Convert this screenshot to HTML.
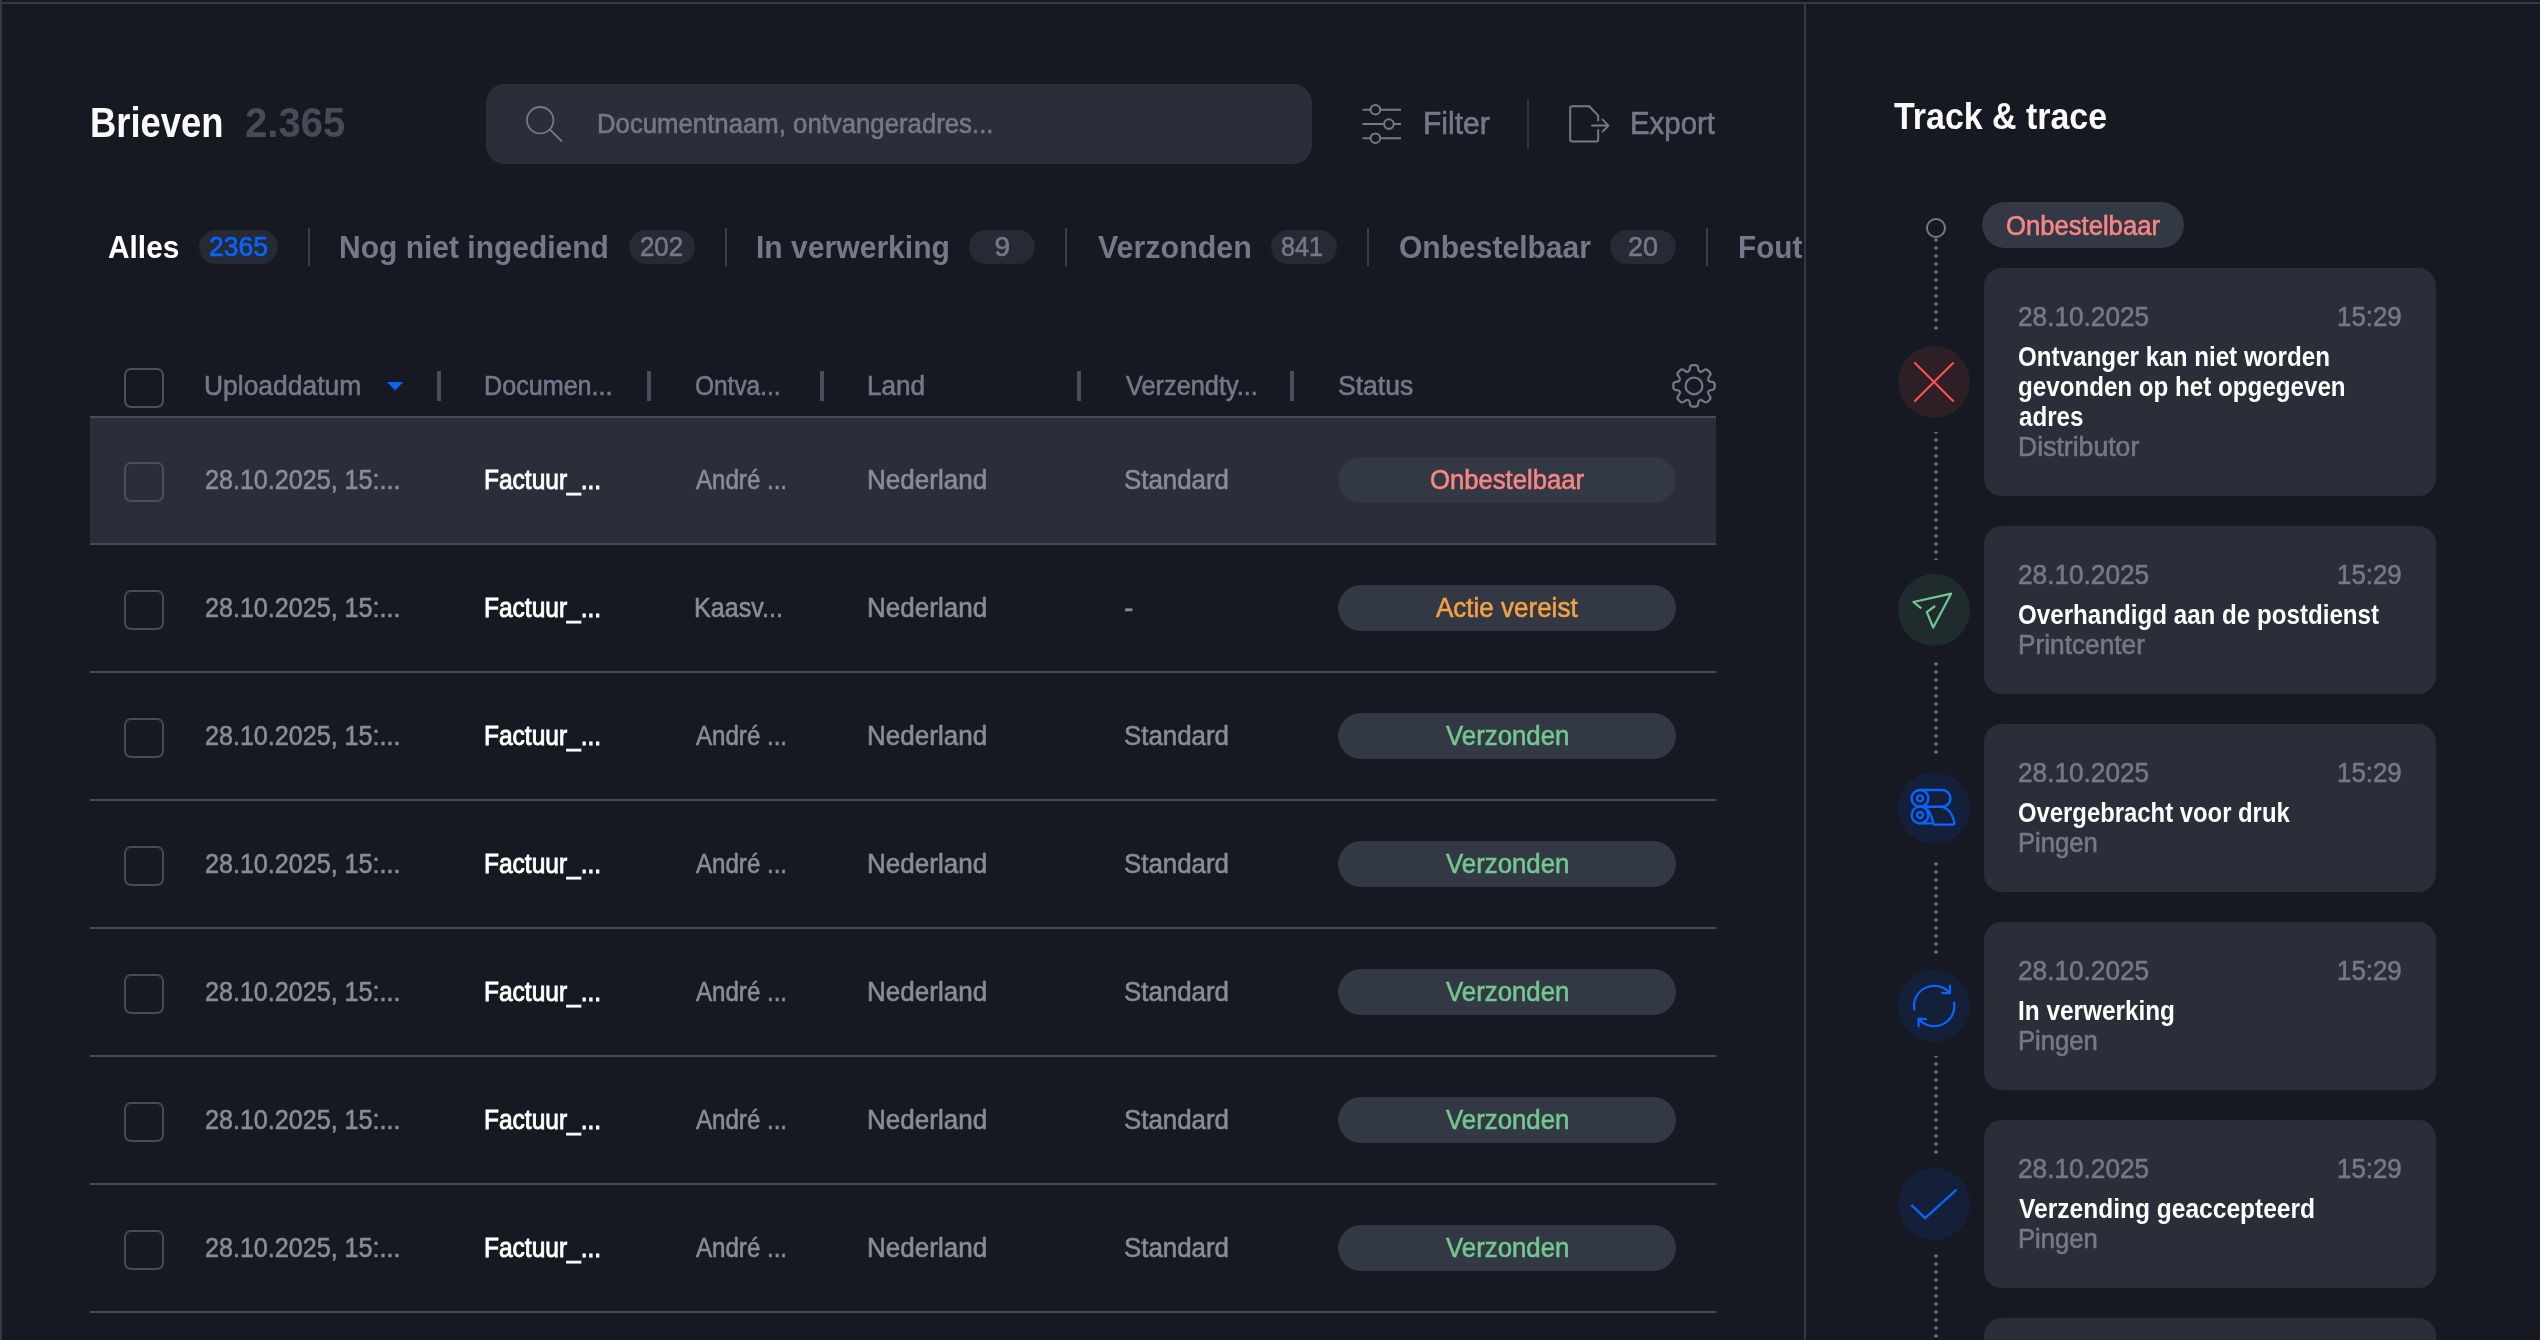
<!DOCTYPE html>
<html lang="nl"><head><meta charset="utf-8"><title>Brieven</title>
<style>
*{margin:0;padding:0}html,body{width:2540px;height:1340px;overflow:hidden;background:#161922}
body{position:relative;font-family:"Liberation Sans",sans-serif;}
body div,body svg,.t{position:absolute}
#app{left:0;top:0;width:2540px;height:1340px;will-change:transform}
.t{white-space:pre;line-height:1;transform-origin:0 0;-webkit-text-stroke:0.6px currentColor}
.b{-webkit-text-stroke:0}
</style></head>
<body>
<div id="app">
<div style="left:0px;top:0px;width:2px;height:1340px;background:#323844;"></div>
<div style="left:0px;top:2px;width:2540px;height:2px;background:#323844;"></div>
<div style="left:1804px;top:4px;width:2px;height:1336px;background:#323844;"></div>
<div style="left:486px;top:84px;width:826px;height:80px;background:#2a2e38;border-radius:19px;"></div>
<svg style="left:520px;top:100px" width="50" height="50" viewBox="520 100 50 50" fill="none" stroke="#757889" stroke-width="1.8" stroke-linecap="round"><circle cx="540.2" cy="120.2" r="13.2"/><path d="M550.2 129.8 L561.6 141"/></svg>
<svg style="left:1356px;top:98px" width="52" height="52" viewBox="1356 98 52 52" fill="none" stroke="#757889" stroke-width="2" stroke-linecap="butt"><path d="M1362.5 109.7H1370.2M1380.6 109.7H1401M1362.5 124.1H1383.7M1394.1 124.1H1401M1362.5 138.2H1370.2M1380.6 138.2H1401"/><circle cx="1375.4" cy="109.7" r="4.8"/><circle cx="1388.9" cy="124.1" r="4.8"/><circle cx="1375.4" cy="138.2" r="4.8"/></svg>
<div style="left:1527px;top:99px;width:2px;height:50px;background:#2e323e;"></div>
<svg style="left:1562px;top:98px" width="54" height="52" viewBox="1562 98 54 52" fill="none" stroke="#757889" stroke-width="2" stroke-linecap="round" stroke-linejoin="round"><path d="M1598.2 120.5V115.6L1589.2 106.3H1572.2a2 2 0 0 0 -2 2V139.5a2 2 0 0 0 2 2H1596.2a2 2 0 0 0 2 -2V130"/><path d="M1592 125.6H1608M1602.6 119.6L1608.4 125.6L1602.6 131.6"/></svg>
<div style="left:199px;top:230px;width:79px;height:34px;background:#262a35;border-radius:17px;"></div>
<div style="left:308px;top:228px;width:2px;height:38px;background:#3b3f4c;"></div>
<div style="left:629px;top:230px;width:66px;height:34px;background:#262a35;border-radius:17px;"></div>
<div style="left:725px;top:228px;width:2px;height:38px;background:#3b3f4c;"></div>
<div style="left:969px;top:230px;width:66px;height:34px;background:#262a35;border-radius:17px;"></div>
<div style="left:1065px;top:228px;width:2px;height:38px;background:#3b3f4c;"></div>
<div style="left:1271px;top:230px;width:66px;height:34px;background:#262a35;border-radius:17px;"></div>
<div style="left:1367px;top:228px;width:2px;height:38px;background:#3b3f4c;"></div>
<div style="left:1610px;top:230px;width:66px;height:34px;background:#262a35;border-radius:17px;"></div>
<div style="left:1706px;top:228px;width:2px;height:38px;background:#3b3f4c;"></div>
<div style="left:1730px;top:220px;width:72px;height:60px;overflow:hidden"><span id="fout" class="t b" style="left:8px;top:11px;font-size:32px;transform:scaleX(0.93);font-weight:700;color:#757889">Fout</span></div>
<div style="left:124px;top:368px;width:40px;height:40px;box-sizing:border-box;border:2px solid #4a4f5c;border-radius:7px"></div>
<svg style="left:386px;top:380px" width="18" height="12" viewBox="386 380 18 12"><path d="M387 382H403.2L395.1 390.4Z" fill="#0864ff"/></svg>
<div style="left:437px;top:371px;width:4px;height:30px;background:#4a4e5c;"></div>
<div style="left:647px;top:371px;width:4px;height:30px;background:#4a4e5c;"></div>
<div style="left:820px;top:371px;width:4px;height:30px;background:#4a4e5c;"></div>
<div style="left:1077px;top:371px;width:4px;height:30px;background:#4a4e5c;"></div>
<div style="left:1290px;top:371px;width:4px;height:30px;background:#4a4e5c;"></div>
<svg style="left:1668px;top:360px" width="52" height="52" viewBox="1668 360 52 52" fill="none" stroke="#757889" stroke-width="2.2" stroke-linejoin="round"><path d="M1688.1 371.8Q1689.6 371.1 1689.9 368.5L1689.9 367.7Q1690.2 365.2 1692.8 365.2L1695.2 365.2Q1697.8 365.2 1698.1 367.7L1698.1 368.5Q1698.4 371.1 1699.9 371.8L1699.9 371.8Q1701.3 372.4 1703.3 370.7L1704.0 370.2Q1706.0 368.5 1707.8 370.3L1709.6 372.1Q1711.4 373.9 1709.7 375.9L1709.2 376.6Q1707.5 378.6 1708.1 380.0L1708.1 380.0Q1708.8 381.5 1711.4 381.8L1712.2 381.8Q1714.7 382.1 1714.7 384.7L1714.7 387.1Q1714.7 389.7 1712.2 390.0L1711.4 390.0Q1708.8 390.3 1708.1 391.8L1708.1 391.8Q1707.5 393.2 1709.2 395.2L1709.7 395.9Q1711.4 397.9 1709.6 399.7L1707.8 401.5Q1706.0 403.3 1704.0 401.6L1703.3 401.1Q1701.3 399.4 1699.9 400.0L1699.9 400.0Q1698.4 400.7 1698.1 403.3L1698.1 404.1Q1697.8 406.6 1695.2 406.6L1692.8 406.6Q1690.2 406.6 1689.9 404.1L1689.9 403.3Q1689.6 400.7 1688.1 400.0L1688.1 400.0Q1686.7 399.4 1684.7 401.1L1684.0 401.6Q1682.0 403.3 1680.2 401.5L1678.4 399.7Q1676.6 397.9 1678.3 395.9L1678.8 395.2Q1680.5 393.2 1679.9 391.8L1679.9 391.8Q1679.2 390.3 1676.6 390.0L1675.8 390.0Q1673.3 389.7 1673.3 387.1L1673.3 384.7Q1673.3 382.1 1675.8 381.8L1676.6 381.8Q1679.2 381.5 1679.9 380.0L1679.9 380.0Q1680.5 378.6 1678.8 376.6L1678.3 375.9Q1676.6 373.9 1678.4 372.1L1680.2 370.3Q1682.0 368.5 1684.0 370.2L1684.7 370.7Q1686.7 372.4 1688.1 371.8Z"/><circle cx="1694.0" cy="385.9" r="8.4"/></svg>
<div style="left:90px;top:416px;width:1626px;height:2px;background:#464b58;"></div>
<div style="left:90px;top:418px;width:1626px;height:125px;background:#2a2e38;"></div>
<div style="left:90px;top:543px;width:1626px;height:2px;background:#464b58;"></div>
<div style="left:124px;top:462px;width:40px;height:40px;box-sizing:border-box;border:2px solid #4a4f5c;border-radius:7px"></div>
<div style="left:1338px;top:457px;width:338px;height:46px;background:#323844;border-radius:23px;"></div>
<div style="left:90px;top:671px;width:1626px;height:2px;background:#464b58;"></div>
<div style="left:124px;top:590px;width:40px;height:40px;box-sizing:border-box;border:2px solid #454a57;border-radius:7px"></div>
<div style="left:1338px;top:585px;width:338px;height:46px;background:#323844;border-radius:23px;"></div>
<div style="left:90px;top:799px;width:1626px;height:2px;background:#464b58;"></div>
<div style="left:124px;top:718px;width:40px;height:40px;box-sizing:border-box;border:2px solid #454a57;border-radius:7px"></div>
<div style="left:1338px;top:713px;width:338px;height:46px;background:#323844;border-radius:23px;"></div>
<div style="left:90px;top:927px;width:1626px;height:2px;background:#464b58;"></div>
<div style="left:124px;top:846px;width:40px;height:40px;box-sizing:border-box;border:2px solid #454a57;border-radius:7px"></div>
<div style="left:1338px;top:841px;width:338px;height:46px;background:#323844;border-radius:23px;"></div>
<div style="left:90px;top:1055px;width:1626px;height:2px;background:#464b58;"></div>
<div style="left:124px;top:974px;width:40px;height:40px;box-sizing:border-box;border:2px solid #454a57;border-radius:7px"></div>
<div style="left:1338px;top:969px;width:338px;height:46px;background:#323844;border-radius:23px;"></div>
<div style="left:90px;top:1183px;width:1626px;height:2px;background:#464b58;"></div>
<div style="left:124px;top:1102px;width:40px;height:40px;box-sizing:border-box;border:2px solid #454a57;border-radius:7px"></div>
<div style="left:1338px;top:1097px;width:338px;height:46px;background:#323844;border-radius:23px;"></div>
<div style="left:90px;top:1311px;width:1626px;height:2px;background:#464b58;"></div>
<div style="left:124px;top:1230px;width:40px;height:40px;box-sizing:border-box;border:2px solid #454a57;border-radius:7px"></div>
<div style="left:1338px;top:1225px;width:338px;height:46px;background:#323844;border-radius:23px;"></div>
<div style="left:1926px;top:218px;width:20px;height:20px;box-sizing:border-box;border:2px solid #757889;border-radius:50%"></div>
<div style="left:1982px;top:202px;width:202px;height:46px;background:#323844;border-radius:23px;"></div>
<svg style="left:1934px;top:238px" width="4" height="94" viewBox="0 0 4 94" fill="#757889"><circle cx="2" cy="-6" r="1.75"/><circle cx="2" cy="2" r="1.75"/><circle cx="2" cy="10" r="1.75"/><circle cx="2" cy="18" r="1.75"/><circle cx="2" cy="26" r="1.75"/><circle cx="2" cy="34" r="1.75"/><circle cx="2" cy="42" r="1.75"/><circle cx="2" cy="50" r="1.75"/><circle cx="2" cy="58" r="1.75"/><circle cx="2" cy="66" r="1.75"/><circle cx="2" cy="74" r="1.75"/><circle cx="2" cy="82" r="1.75"/><circle cx="2" cy="90" r="1.75"/><circle cx="2" cy="98" r="1.75"/></svg>
<svg style="left:1934px;top:432px" width="4" height="128" viewBox="0 0 4 128" fill="#757889"><circle cx="2" cy="0" r="1.75"/><circle cx="2" cy="8" r="1.75"/><circle cx="2" cy="16" r="1.75"/><circle cx="2" cy="24" r="1.75"/><circle cx="2" cy="32" r="1.75"/><circle cx="2" cy="40" r="1.75"/><circle cx="2" cy="48" r="1.75"/><circle cx="2" cy="56" r="1.75"/><circle cx="2" cy="64" r="1.75"/><circle cx="2" cy="72" r="1.75"/><circle cx="2" cy="80" r="1.75"/><circle cx="2" cy="88" r="1.75"/><circle cx="2" cy="96" r="1.75"/><circle cx="2" cy="104" r="1.75"/><circle cx="2" cy="112" r="1.75"/><circle cx="2" cy="120" r="1.75"/><circle cx="2" cy="128" r="1.75"/></svg>
<svg style="left:1934px;top:660px" width="4" height="98" viewBox="0 0 4 98" fill="#757889"><circle cx="2" cy="-4" r="1.75"/><circle cx="2" cy="4" r="1.75"/><circle cx="2" cy="12" r="1.75"/><circle cx="2" cy="20" r="1.75"/><circle cx="2" cy="28" r="1.75"/><circle cx="2" cy="36" r="1.75"/><circle cx="2" cy="44" r="1.75"/><circle cx="2" cy="52" r="1.75"/><circle cx="2" cy="60" r="1.75"/><circle cx="2" cy="68" r="1.75"/><circle cx="2" cy="76" r="1.75"/><circle cx="2" cy="84" r="1.75"/><circle cx="2" cy="92" r="1.75"/><circle cx="2" cy="100" r="1.75"/></svg>
<svg style="left:1934px;top:858px" width="4" height="98" viewBox="0 0 4 98" fill="#757889"><circle cx="2" cy="-2" r="1.75"/><circle cx="2" cy="6" r="1.75"/><circle cx="2" cy="14" r="1.75"/><circle cx="2" cy="22" r="1.75"/><circle cx="2" cy="30" r="1.75"/><circle cx="2" cy="38" r="1.75"/><circle cx="2" cy="46" r="1.75"/><circle cx="2" cy="54" r="1.75"/><circle cx="2" cy="62" r="1.75"/><circle cx="2" cy="70" r="1.75"/><circle cx="2" cy="78" r="1.75"/><circle cx="2" cy="86" r="1.75"/><circle cx="2" cy="94" r="1.75"/><circle cx="2" cy="102" r="1.75"/></svg>
<svg style="left:1934px;top:1056px" width="4" height="98" viewBox="0 0 4 98" fill="#757889"><circle cx="2" cy="0" r="1.75"/><circle cx="2" cy="8" r="1.75"/><circle cx="2" cy="16" r="1.75"/><circle cx="2" cy="24" r="1.75"/><circle cx="2" cy="32" r="1.75"/><circle cx="2" cy="40" r="1.75"/><circle cx="2" cy="48" r="1.75"/><circle cx="2" cy="56" r="1.75"/><circle cx="2" cy="64" r="1.75"/><circle cx="2" cy="72" r="1.75"/><circle cx="2" cy="80" r="1.75"/><circle cx="2" cy="88" r="1.75"/><circle cx="2" cy="96" r="1.75"/><circle cx="2" cy="104" r="1.75"/></svg>
<svg style="left:1934px;top:1254px" width="4" height="86" viewBox="0 0 4 86" fill="#757889"><circle cx="2" cy="-6" r="1.75"/><circle cx="2" cy="2" r="1.75"/><circle cx="2" cy="10" r="1.75"/><circle cx="2" cy="18" r="1.75"/><circle cx="2" cy="26" r="1.75"/><circle cx="2" cy="34" r="1.75"/><circle cx="2" cy="42" r="1.75"/><circle cx="2" cy="50" r="1.75"/><circle cx="2" cy="58" r="1.75"/><circle cx="2" cy="66" r="1.75"/><circle cx="2" cy="74" r="1.75"/><circle cx="2" cy="82" r="1.75"/><circle cx="2" cy="90" r="1.75"/></svg>
<div style="left:1984px;top:268px;width:452px;height:228px;background:#2a2e38;border-radius:18px;"></div>
<div style="left:1984px;top:526px;width:452px;height:168px;background:#2a2e38;border-radius:18px;"></div>
<div style="left:1984px;top:724px;width:452px;height:168px;background:#2a2e38;border-radius:18px;"></div>
<div style="left:1984px;top:922px;width:452px;height:168px;background:#2a2e38;border-radius:18px;"></div>
<div style="left:1984px;top:1120px;width:452px;height:168px;background:#2a2e38;border-radius:18px;"></div>
<div style="left:1984px;top:1318px;width:452px;height:168px;background:#2a2e38;border-radius:18px;"></div>
<div style="left:1898px;top:346px;width:72px;height:72px;border-radius:50%;background:#2d1f25"></div>
<div style="left:1898px;top:574px;width:72px;height:72px;border-radius:50%;background:#1f2b2d"></div>
<div style="left:1898px;top:772px;width:72px;height:72px;border-radius:50%;background:#14203a"></div>
<div style="left:1898px;top:970px;width:72px;height:72px;border-radius:50%;background:#14203a"></div>
<div style="left:1898px;top:1168px;width:72px;height:72px;border-radius:50%;background:#14203a"></div>
<svg style="left:1898px;top:346px" width="72" height="72" viewBox="1898 346 72 72" fill="none" stroke="#fa5252" stroke-width="2.1" stroke-linecap="round" stroke-linejoin="round"><path d="M1914.4 362.4L1953.6 401.6M1953.6 362.4L1914.4 401.6" stroke-linecap="butt"/></svg>
<svg style="left:1898px;top:574px" width="72" height="72" viewBox="1898 574 72 72" fill="none" stroke="#70c890" stroke-width="2.2" stroke-linecap="round" stroke-linejoin="round"><path d="M1921.4 608.3L1913.4 602L1951.2 593.6L1933.2 627.5L1926.8 612.1L1935.1 606" stroke-linecap="butt"/></svg>
<svg style="left:1898px;top:772px" width="72" height="72" viewBox="1898 772 72 72" fill="none" stroke="#0864ff" stroke-width="2.4" stroke-linecap="round" stroke-linejoin="round"><path d="M1920 790H1942a8.4 8.4 0 0 1 0 16.8H1920"/><circle cx="1920" cy="798.4" r="8.4"/><circle cx="1920" cy="798.4" r="3"/><circle cx="1920" cy="815" r="8.4"/><circle cx="1920" cy="815" r="3"/><path d="M1920 823.4H1931"/><path d="M1927.2 809.4C1931 812.5 1932 819 1933.8 824.6H1952.4a2 2 0 0 0 2-2.4C1952.5 814.5 1949.4 808.5 1942.6 806.8"/></svg>
<svg style="left:1898px;top:970px" width="72" height="72" viewBox="1898 970 72 72" fill="none" stroke="#0864ff" stroke-width="2.2" stroke-linecap="round" stroke-linejoin="round"><path d="M1914.3 1009.5A20.2 20.2 0 0 1 1949.2 992.5"/><path d="M1942.3 992.9L1950 993.3L1949.8 985.7"/><path d="M1954.1 1002.5A20.2 20.2 0 0 1 1919.2 1019.5"/><path d="M1926.1 1019.1L1918.4 1018.7L1918.6 1026.3"/></svg>
<svg style="left:1898px;top:1168px" width="72" height="72" viewBox="1898 1168 72 72" fill="none" stroke="#0864ff" stroke-width="2.4" stroke-linecap="round" stroke-linejoin="round"><path d="M1911.4 1204.9L1925.1 1218.1L1956.6 1189.7" stroke-linecap="butt" stroke-linejoin="miter"/></svg>
<span class="t b" style="left:90.27px;top:102.00px;font-size:42px;color:#fafafa;font-weight:700;transform:scaleX(0.8662);">Brieven</span>
<span class="t b" style="left:244.65px;top:102.00px;font-size:42px;color:#464b58;font-weight:700;transform:scaleX(0.9533);">2.365</span>
<span class="t" style="left:597.39px;top:111.00px;font-size:27px;color:#757889;transform:scaleX(0.9536);">Documentnaam, ontvangeradres...</span>
<span class="t" style="left:1422.66px;top:108.00px;font-size:31px;color:#757889;transform:scaleX(0.9690);">Filter</span>
<span class="t" style="left:1630.10px;top:108.00px;font-size:31px;color:#757889;transform:scaleX(0.9491);">Export</span>
<span class="t b" style="left:108.10px;top:231.00px;font-size:32px;color:#ffffff;font-weight:700;transform:scaleX(0.9328);">Alles</span>
<span class="t" style="left:208.95px;top:233.00px;font-size:28px;color:#0864ff;transform:scaleX(0.9470);">2365</span>
<span class="t b" style="left:339.33px;top:231.00px;font-size:32px;color:#757889;font-weight:700;transform:scaleX(0.9373);">Nog niet ingediend</span>
<span class="t" style="left:640.08px;top:233.00px;font-size:28px;color:#757889;transform:scaleX(0.9215);">202</span>
<span class="t b" style="left:755.52px;top:231.00px;font-size:32px;color:#757889;font-weight:700;transform:scaleX(0.9401);">In verwerking</span>
<span class="t" style="left:994.50px;top:233.00px;font-size:28px;color:#757889;">9</span>
<span class="t b" style="left:1097.70px;top:231.00px;font-size:32px;color:#757889;font-weight:700;transform:scaleX(0.9503);">Verzonden</span>
<span class="t" style="left:1281.10px;top:233.00px;font-size:28px;color:#757889;transform:scaleX(0.9015);">841</span>
<span class="t b" style="left:1398.66px;top:231.00px;font-size:32px;color:#757889;font-weight:700;transform:scaleX(0.9386);">Onbestelbaar</span>
<span class="t" style="left:1627.54px;top:233.00px;font-size:28px;color:#757889;transform:scaleX(0.9604);">20</span>
<span class="t" style="left:203.64px;top:373.00px;font-size:27px;color:#757889;transform:scaleX(0.9789);">Uploaddatum</span>
<span class="t" style="left:484.34px;top:373.00px;font-size:27px;color:#757889;transform:scaleX(0.9312);">Documen...</span>
<span class="t" style="left:694.59px;top:373.00px;font-size:27px;color:#757889;transform:scaleX(0.9051);">Ontva...</span>
<span class="t" style="left:866.86px;top:373.00px;font-size:27px;color:#757889;transform:scaleX(0.9676);">Land</span>
<span class="t" style="left:1125.50px;top:373.00px;font-size:27px;color:#757889;transform:scaleX(0.9376);">Verzendty...</span>
<span class="t" style="left:1337.52px;top:373.00px;font-size:27px;color:#757889;transform:scaleX(0.9821);">Status</span>
<span class="t" style="left:204.67px;top:467.00px;font-size:27px;color:#888d97;transform:scaleX(0.9298);">28.10.2025, 15:...</span>
<span class="t" style="left:484.38px;top:467.00px;font-size:27px;color:#ffffff;transform:scaleX(0.9080);-webkit-text-stroke:0.9px #fff;">Factuur_...</span>
<span class="t" style="left:695.50px;top:467.00px;font-size:27px;color:#888d97;transform:scaleX(0.8921);">André ...</span>
<span class="t" style="left:866.87px;top:467.00px;font-size:27px;color:#888d97;transform:scaleX(0.9641);">Nederland</span>
<span class="t" style="left:1124.04px;top:467.00px;font-size:27px;color:#888d97;transform:scaleX(0.9576);">Standard</span>
<span class="t" style="left:1429.65px;top:467.00px;font-size:27px;color:#fa8585;transform:scaleX(0.9503);">Onbestelbaar</span>
<span class="t" style="left:204.67px;top:595.00px;font-size:27px;color:#888d97;transform:scaleX(0.9298);">28.10.2025, 15:...</span>
<span class="t" style="left:484.38px;top:595.00px;font-size:27px;color:#ffffff;transform:scaleX(0.9080);-webkit-text-stroke:0.9px #fff;">Factuur_...</span>
<span class="t" style="left:693.84px;top:595.00px;font-size:27px;color:#888d97;transform:scaleX(0.9300);">Kaasv...</span>
<span class="t" style="left:866.87px;top:595.00px;font-size:27px;color:#888d97;transform:scaleX(0.9641);">Nederland</span>
<span class="t" style="left:1124.20px;top:595.00px;font-size:27px;color:#888d97;">-</span>
<span class="t" style="left:1435.90px;top:595.00px;font-size:27px;color:#f5a142;transform:scaleX(0.9631);">Actie vereist</span>
<span class="t" style="left:204.67px;top:723.00px;font-size:27px;color:#888d97;transform:scaleX(0.9298);">28.10.2025, 15:...</span>
<span class="t" style="left:484.38px;top:723.00px;font-size:27px;color:#ffffff;transform:scaleX(0.9080);-webkit-text-stroke:0.9px #fff;">Factuur_...</span>
<span class="t" style="left:695.50px;top:723.00px;font-size:27px;color:#888d97;transform:scaleX(0.8921);">André ...</span>
<span class="t" style="left:866.87px;top:723.00px;font-size:27px;color:#888d97;transform:scaleX(0.9641);">Nederland</span>
<span class="t" style="left:1124.04px;top:723.00px;font-size:27px;color:#888d97;transform:scaleX(0.9576);">Standard</span>
<span class="t" style="left:1445.70px;top:723.00px;font-size:27px;color:#72c890;transform:scaleX(0.9556);">Verzonden</span>
<span class="t" style="left:204.67px;top:851.00px;font-size:27px;color:#888d97;transform:scaleX(0.9298);">28.10.2025, 15:...</span>
<span class="t" style="left:484.38px;top:851.00px;font-size:27px;color:#ffffff;transform:scaleX(0.9080);-webkit-text-stroke:0.9px #fff;">Factuur_...</span>
<span class="t" style="left:695.50px;top:851.00px;font-size:27px;color:#888d97;transform:scaleX(0.8921);">André ...</span>
<span class="t" style="left:866.87px;top:851.00px;font-size:27px;color:#888d97;transform:scaleX(0.9641);">Nederland</span>
<span class="t" style="left:1124.04px;top:851.00px;font-size:27px;color:#888d97;transform:scaleX(0.9576);">Standard</span>
<span class="t" style="left:1445.70px;top:851.00px;font-size:27px;color:#72c890;transform:scaleX(0.9556);">Verzonden</span>
<span class="t" style="left:204.67px;top:979.00px;font-size:27px;color:#888d97;transform:scaleX(0.9298);">28.10.2025, 15:...</span>
<span class="t" style="left:484.38px;top:979.00px;font-size:27px;color:#ffffff;transform:scaleX(0.9080);-webkit-text-stroke:0.9px #fff;">Factuur_...</span>
<span class="t" style="left:695.50px;top:979.00px;font-size:27px;color:#888d97;transform:scaleX(0.8921);">André ...</span>
<span class="t" style="left:866.87px;top:979.00px;font-size:27px;color:#888d97;transform:scaleX(0.9641);">Nederland</span>
<span class="t" style="left:1124.04px;top:979.00px;font-size:27px;color:#888d97;transform:scaleX(0.9576);">Standard</span>
<span class="t" style="left:1445.70px;top:979.00px;font-size:27px;color:#72c890;transform:scaleX(0.9556);">Verzonden</span>
<span class="t" style="left:204.67px;top:1107.00px;font-size:27px;color:#888d97;transform:scaleX(0.9298);">28.10.2025, 15:...</span>
<span class="t" style="left:484.38px;top:1107.00px;font-size:27px;color:#ffffff;transform:scaleX(0.9080);-webkit-text-stroke:0.9px #fff;">Factuur_...</span>
<span class="t" style="left:695.50px;top:1107.00px;font-size:27px;color:#888d97;transform:scaleX(0.8921);">André ...</span>
<span class="t" style="left:866.87px;top:1107.00px;font-size:27px;color:#888d97;transform:scaleX(0.9641);">Nederland</span>
<span class="t" style="left:1124.04px;top:1107.00px;font-size:27px;color:#888d97;transform:scaleX(0.9576);">Standard</span>
<span class="t" style="left:1445.70px;top:1107.00px;font-size:27px;color:#72c890;transform:scaleX(0.9556);">Verzonden</span>
<span class="t" style="left:204.67px;top:1235.00px;font-size:27px;color:#888d97;transform:scaleX(0.9298);">28.10.2025, 15:...</span>
<span class="t" style="left:484.38px;top:1235.00px;font-size:27px;color:#ffffff;transform:scaleX(0.9080);-webkit-text-stroke:0.9px #fff;">Factuur_...</span>
<span class="t" style="left:695.50px;top:1235.00px;font-size:27px;color:#888d97;transform:scaleX(0.8921);">André ...</span>
<span class="t" style="left:866.87px;top:1235.00px;font-size:27px;color:#888d97;transform:scaleX(0.9641);">Nederland</span>
<span class="t" style="left:1124.04px;top:1235.00px;font-size:27px;color:#888d97;transform:scaleX(0.9576);">Standard</span>
<span class="t" style="left:1445.70px;top:1235.00px;font-size:27px;color:#72c890;transform:scaleX(0.9556);">Verzonden</span>
<span class="t b" style="left:1894.00px;top:99.00px;font-size:36px;color:#fafafa;font-weight:700;transform:scaleX(0.9422);">Track &amp; trace</span>
<span class="t" style="left:2005.75px;top:213.00px;font-size:27px;color:#fa8585;transform:scaleX(0.9496);">Onbestelbaar</span>
<span class="t" style="left:2017.83px;top:304.00px;font-size:27px;color:#757889;transform:scaleX(0.9706);">28.10.2025</span>
<span class="t" style="left:2337.19px;top:304.00px;font-size:27px;color:#757889;transform:scaleX(0.9574);">15:29</span>
<span class="t b" style="left:2017.90px;top:344.00px;font-size:27px;color:#ffffff;font-weight:700;transform:scaleX(0.8962);">Ontvanger kan niet worden</span>
<span class="t b" style="left:2017.90px;top:374.00px;font-size:27px;color:#ffffff;font-weight:700;transform:scaleX(0.8951);">gevonden op het opgegeven</span>
<span class="t b" style="left:2018.80px;top:404.00px;font-size:27px;color:#ffffff;font-weight:700;transform:scaleX(0.8954);">adres</span>
<span class="t" style="left:2017.53px;top:434.00px;font-size:27px;color:#757889;transform:scaleX(0.9856);">Distributor</span>
<span class="t" style="left:2017.83px;top:562.00px;font-size:27px;color:#757889;transform:scaleX(0.9706);">28.10.2025</span>
<span class="t" style="left:2337.19px;top:562.00px;font-size:27px;color:#757889;transform:scaleX(0.9574);">15:29</span>
<span class="t b" style="left:2017.91px;top:602.00px;font-size:27px;color:#ffffff;font-weight:700;transform:scaleX(0.8947);">Overhandigd aan de postdienst</span>
<span class="t" style="left:2017.56px;top:632.00px;font-size:27px;color:#757889;transform:scaleX(0.9723);">Printcenter</span>
<span class="t" style="left:2017.83px;top:760.00px;font-size:27px;color:#757889;transform:scaleX(0.9706);">28.10.2025</span>
<span class="t" style="left:2337.19px;top:760.00px;font-size:27px;color:#757889;transform:scaleX(0.9574);">15:29</span>
<span class="t b" style="left:2017.92px;top:800.00px;font-size:27px;color:#ffffff;font-weight:700;transform:scaleX(0.8834);">Overgebracht voor druk</span>
<span class="t" style="left:2017.60px;top:830.00px;font-size:27px;color:#757889;transform:scaleX(0.9500);">Pingen</span>
<span class="t" style="left:2017.83px;top:958.00px;font-size:27px;color:#757889;transform:scaleX(0.9706);">28.10.2025</span>
<span class="t" style="left:2337.19px;top:958.00px;font-size:27px;color:#757889;transform:scaleX(0.9574);">15:29</span>
<span class="t b" style="left:2017.90px;top:998.00px;font-size:27px;color:#ffffff;font-weight:700;transform:scaleX(0.9017);">In verwerking</span>
<span class="t" style="left:2017.60px;top:1028.00px;font-size:27px;color:#757889;transform:scaleX(0.9500);">Pingen</span>
<span class="t" style="left:2017.83px;top:1156.00px;font-size:27px;color:#757889;transform:scaleX(0.9706);">28.10.2025</span>
<span class="t" style="left:2337.19px;top:1156.00px;font-size:27px;color:#757889;transform:scaleX(0.9574);">15:29</span>
<span class="t b" style="left:2018.80px;top:1196.00px;font-size:27px;color:#ffffff;font-weight:700;transform:scaleX(0.9092);">Verzending geaccepteerd</span>
<span class="t" style="left:2017.60px;top:1226.00px;font-size:27px;color:#757889;transform:scaleX(0.9500);">Pingen</span>
</div>
</body></html>
